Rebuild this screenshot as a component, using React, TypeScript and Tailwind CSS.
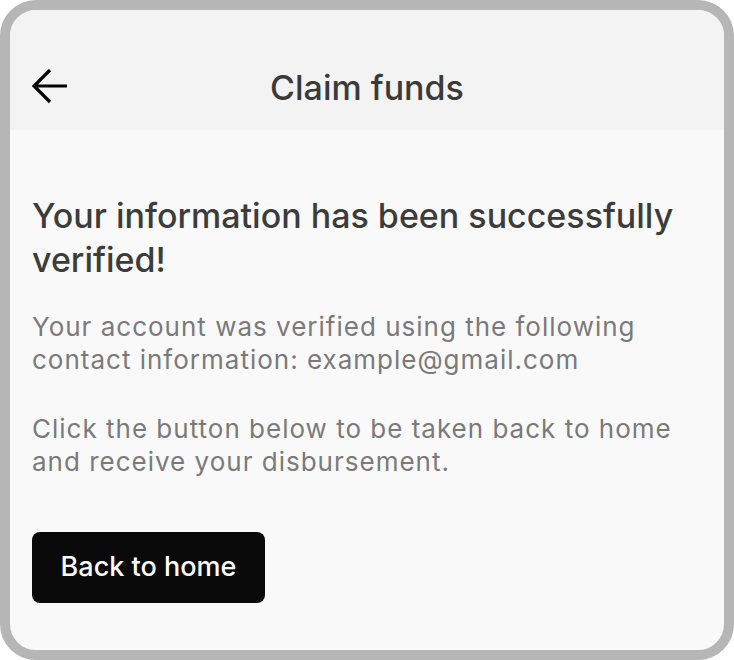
export default function App() {
  return (
    <div className="w-[734px] h-[660px] bg-white" style={{ fontFamily: 'Inter, "Noto Sans", sans-serif' }}>
      <div className="h-full border-[10px] border-[#b6b6b6] rounded-[36px] overflow-hidden bg-[#f9f9f9] flex flex-col">
        {/* Header */}
        <div className="h-[120px] bg-[#f3f3f3] relative flex justify-center pt-[56px]">
          <button className="absolute left-[22px] top-[59px]">
            <svg width="36" height="36" viewBox="0 0 36 36" fill="none">
              <path d="M35 17H2M18 1L2 17L18 33" stroke="#000" strokeWidth="3.2" />
            </svg>
          </button>
          <div className="text-[34px] leading-[44px] text-[#3a3a3a] font-medium">Claim funds</div>
        </div>

        {/* Body */}
        <div className="px-[22px] pt-[64px]">
          <h1 className="text-[34px] leading-[44px] font-medium text-[#3c3c3c]">
            Your information has been successfully verified!
          </h1>
          <p className="mt-[28px] text-[26px] leading-[33px] text-[#7a7a7a] tracking-[1px]">
            Your account was verified using the following contact information: example@gmail.com
          </p>
          <p className="mt-[36px] text-[26px] leading-[33px] text-[#7a7a7a] tracking-[1px]">
            Click the button below to be taken back to home and receive your disbursement.
          </p>
          <button className="mt-[54px] w-[233px] h-[71px] rounded-[8px] bg-[#0a0a0a] text-white text-[27px] font-medium">
            Back to home
          </button>
        </div>
      </div>
    </div>
  );
}
